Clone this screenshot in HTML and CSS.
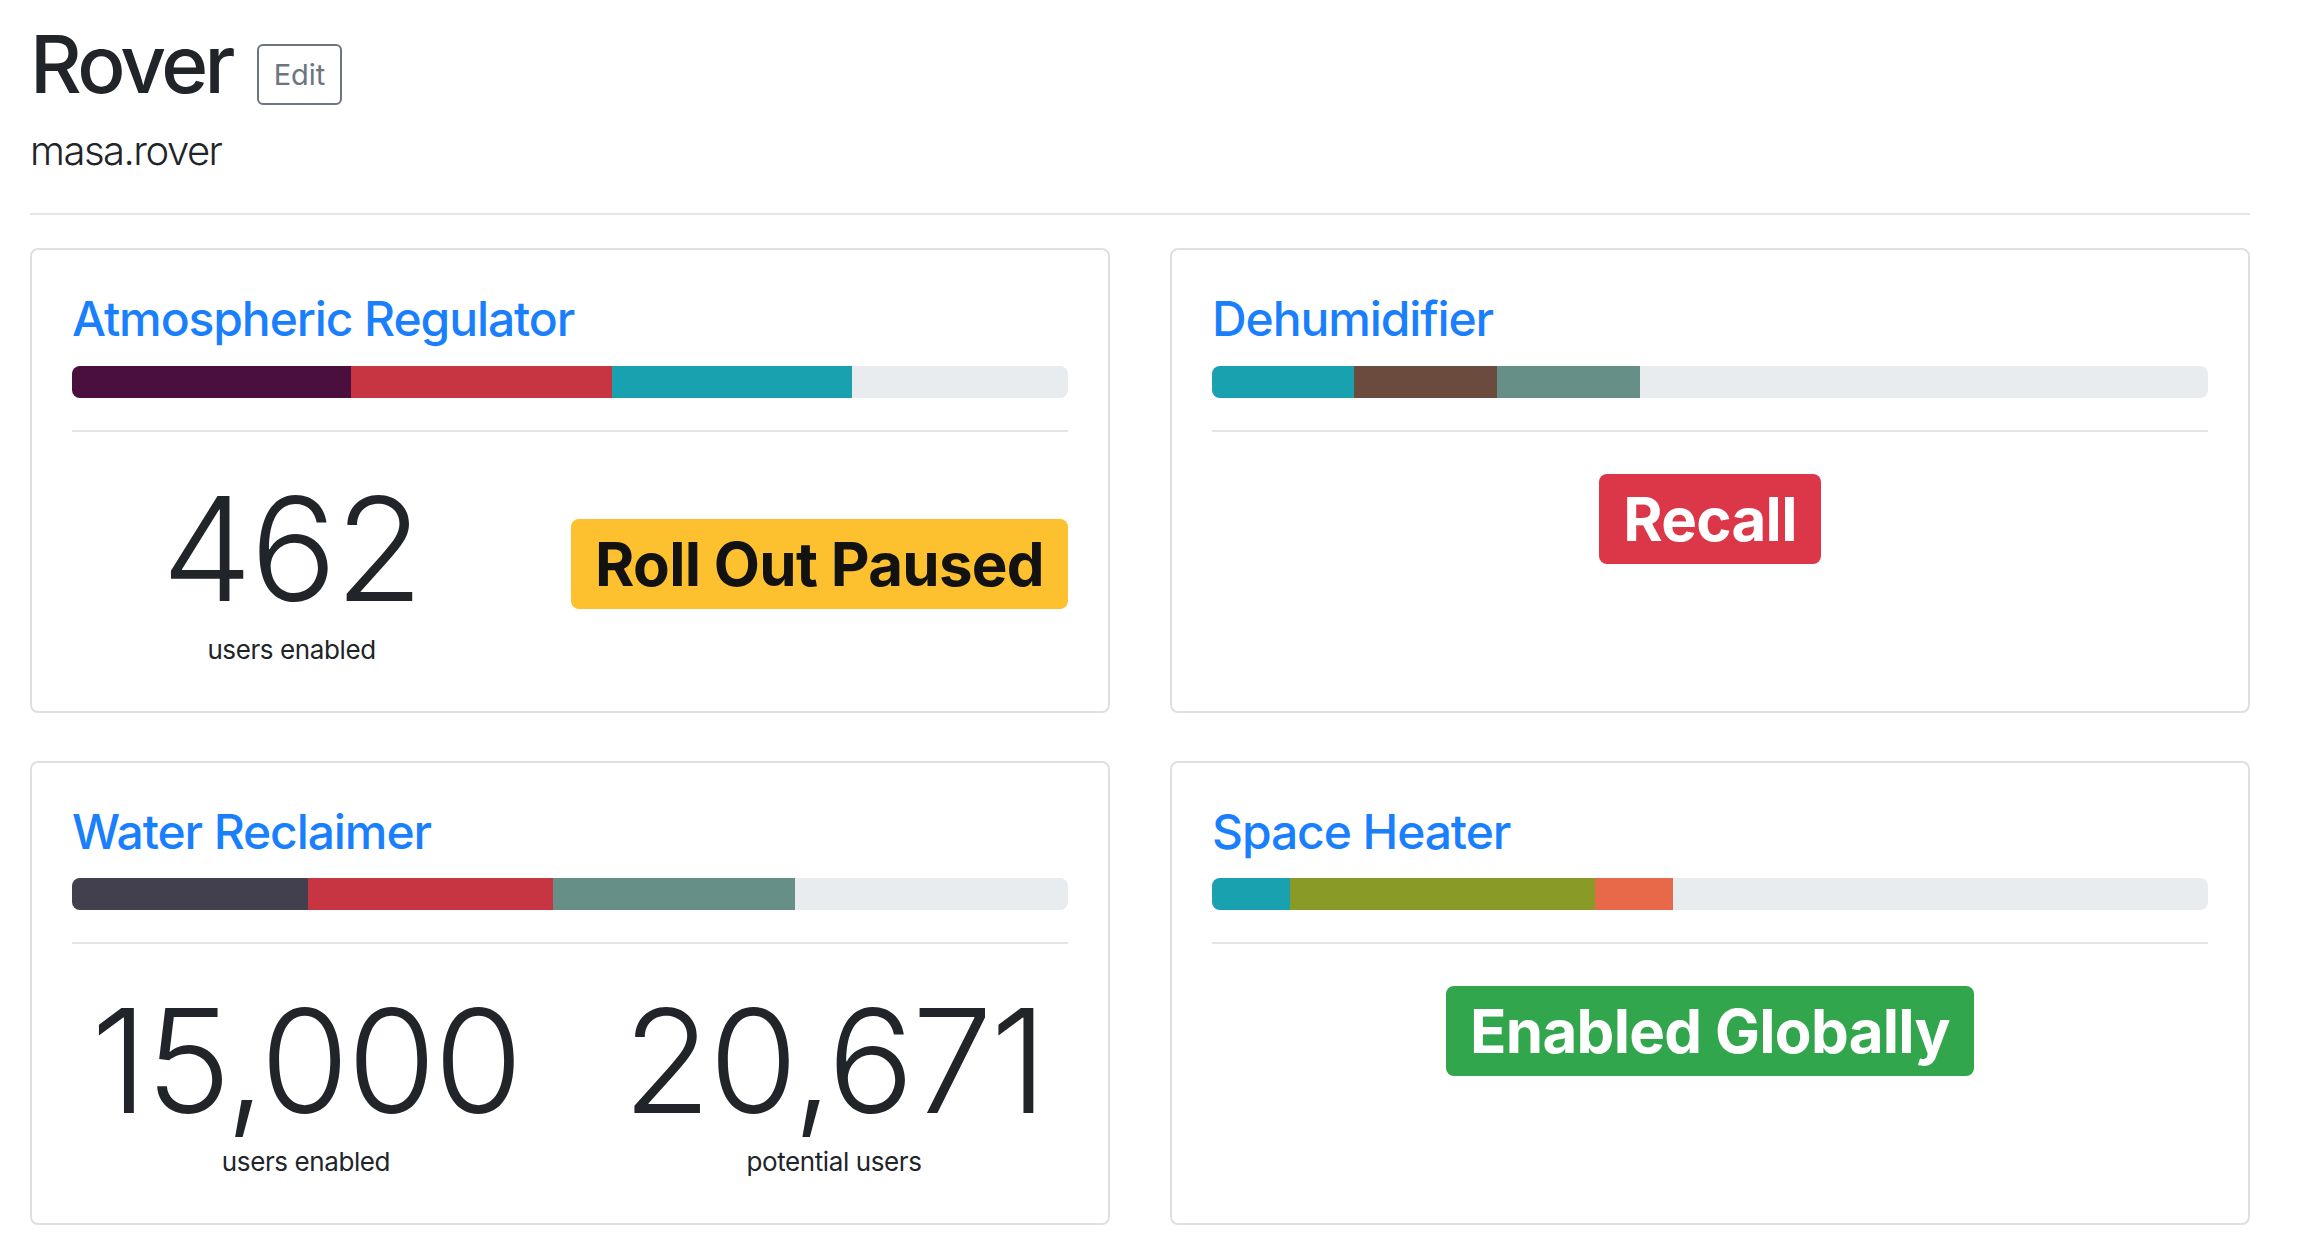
FILE: index.html
```html
<!DOCTYPE html>
<html lang="en">
<head>
<meta charset="utf-8">
<title>Rover</title>
<link rel="stylesheet" href="styles.css">
</head>
<body>
<main class="page">
  <header class="head">
    <h1 class="app-title">Rover <button class="btn-edit" type="button">Edit</button></h1>
    <p class="lead">masa.rover</p>
  </header>
  <hr class="rule top-rule">
  <section class="cards">
    <article class="card">
      <h4 class="card-title"><a href="#">Atmospheric Regulator</a></h4>
      <div class="progress">
        <div class="seg purple" style="width:27.97%"></div>
        <div class="seg red" style="width:26.2%"></div>
        <div class="seg teal" style="width:24.15%"></div>
      </div>
      <hr class="rule card-rule">
      <div class="split">
        <div class="stat">
          <div class="stat-num">462</div>
          <div class="stat-label">users enabled</div>
        </div>
        <div class="badge-col">
          <h1 class="badge-line"><span class="badge warning">Roll Out Paused</span></h1>
        </div>
      </div>
    </article>
    <article class="card">
      <h4 class="card-title"><a href="#">Dehumidifier</a></h4>
      <div class="progress">
        <div class="seg teal" style="width:14.3%"></div>
        <div class="seg brown" style="width:14.35%"></div>
        <div class="seg sage" style="width:14.3%"></div>
      </div>
      <hr class="rule card-rule">
      <h1 class="badge-line"><span class="badge danger">Recall</span></h1>
    </article>
    <article class="card">
      <h4 class="card-title"><a href="#">Water Reclaimer</a></h4>
      <div class="progress">
        <div class="seg slate" style="width:23.7%"></div>
        <div class="seg red" style="width:24.55%"></div>
        <div class="seg sage" style="width:24.35%"></div>
      </div>
      <hr class="rule card-rule">
      <div class="split">
        <div class="stat">
          <div class="stat-num">15,000</div>
          <div class="stat-label">users enabled</div>
        </div>
        <div class="stat">
          <div class="stat-num">20,671</div>
          <div class="stat-label">potential users</div>
        </div>
      </div>
    </article>
    <article class="card">
      <h4 class="card-title"><a href="#">Space Heater</a></h4>
      <div class="progress">
        <div class="seg teal" style="width:7.8%"></div>
        <div class="seg olive" style="width:30.7%"></div>
        <div class="seg orange" style="width:7.75%"></div>
      </div>
      <hr class="rule card-rule">
      <h1 class="badge-line"><span class="badge success">Enabled Globally</span></h1>
    </article>
  </section>
</main>
</body>
</html>
```

FILE: styles.css
```css
* { box-sizing: border-box; }

html, body {
  margin: 0;
  background: #ffffff;
}

body {
  font-family: Inter, "Noto Sans", "Liberation Sans", sans-serif;
  color: #212529;
  font-size: 32px;
  line-height: 1.5;
}

.page {
  width: 2220px;
  margin-left: 30px;
  padding-top: 16px;
}

.app-title {
  margin: 0 0 9px;
  font-size: 80px;
  font-weight: 500;
  line-height: 96px;
  letter-spacing: -3.6px;
}

.btn-edit {
  display: inline-block;
  vertical-align: middle;
  font-family: inherit;
  font-size: 29px;
  font-weight: 400;
  line-height: 41px;
  letter-spacing: 0;
  color: #6c757d;
  background: transparent;
  border: 2px solid #6c757d;
  border-radius: 6px;
  padding: 8px 15px;
  margin: 6px 0 0 7px;
}

.lead {
  margin: 0 0 32px;
  font-size: 40px;
  font-weight: 300;
  line-height: 60px;
  letter-spacing: -1.5px;
}

.rule {
  border: 0;
  border-top: 2px solid #e5e5e5;
  margin: 32px 0;
  height: 0;
}

.top-rule { margin-bottom: 33px; }

.cards {
  display: grid;
  grid-template-columns: 1fr 1fr;
  column-gap: 60px;
  row-gap: 48px;
}

.card {
  border: 2px solid #dfdfdf;
  border-radius: 8px;
  padding: 40px;
  min-width: 0;
}

.card-title {
  margin: 0 0 18px;
  font-size: 48px;
  font-weight: 500;
  line-height: 1.2;
  letter-spacing: -1.1px;
}

.card-title a {
  color: #1a7ffd;
  text-decoration: none;
}

.progress {
  display: flex;
  height: 32px;
  background: #e9ecef;
  border-radius: 8px;
  overflow: hidden;
}

.seg { height: 100%; }
.purple { background: #4a0f3d; }
.red { background: #c83542; }
.teal { background: #1aa1b0; }
.brown { background: #6b4b3e; }
.sage { background: #658f87; }
.slate { background: #42404f; }
.olive { background: #8a9a27; }
.orange { background: #e8694a; }

.card-rule { margin: 32px 0; }

.split {
  display: flex;
  align-items: center;
  gap: 60px;
}

.stat {
  flex: 1 1 0;
  min-width: 0;
  text-align: center;
}

.stat-num {
  font-size: 144px;
  font-weight: 300;
  line-height: 158px;
  padding-top: 6px;
  letter-spacing: -2px;
}

.stat-label {
  font-size: 26px;
  line-height: 43px;
  letter-spacing: -0.4px;
}

.badge-col { flex: 0 0 auto; }

.badge-line {
  margin: 0 0 16px;
  font-size: 80px;
  font-weight: 500;
  line-height: 96px;
  text-align: center;
}

.badge {
  display: inline-block;
  font-size: 60px;
  font-weight: 700;
  line-height: 1;
  padding: 15px 24px;
  border-radius: 8px;
  letter-spacing: -0.7px;
  vertical-align: baseline;
}

.warning { background: #fdc12f; color: #121212; }
.danger { background: #db3749; color: #ffffff; }
.success { background: #31a64c; color: #ffffff; }
```
